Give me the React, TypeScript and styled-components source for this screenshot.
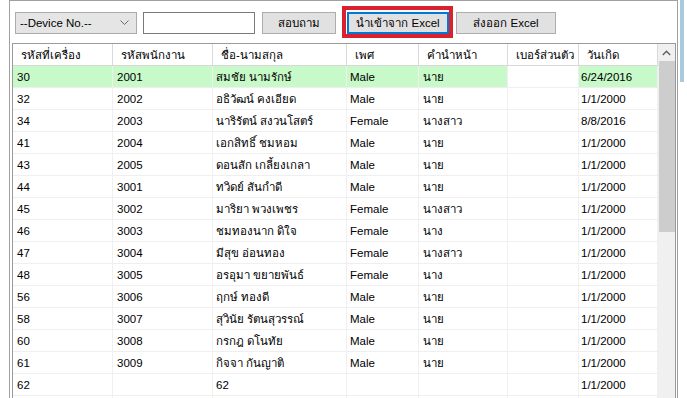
import React from 'react';
import styled, { createGlobalStyle } from 'styled-components';

const Global = createGlobalStyle`
  html, body { margin: 0; padding: 0; background: #ffffff; }
  body {
    font-family: Tahoma, "Liberation Sans", "DejaVu Sans", sans-serif;
    font-size: 11px;
    color: #000000;
  }
  * { box-sizing: border-box; }
`;

const Page = styled.div`
  display: flex;
  width: 687px;
  height: 398px;
  overflow: hidden;
  padding-left: 9px;
`;

const Frame = styled.div`
  width: 669px;
  height: 398px;
  flex: none;
  border: 1px solid #a0a0a0;
  border-bottom: none;
  display: flex;
  flex-direction: column;
`;

const SideStrip = styled.div`
  width: 10px;
  flex: none;
  padding-left: 1px;
`;

const SideBar = styled.div`
  width: 4px;
  height: 82px;
  background: #a9cadb;
  margin-left: 1px;
`;

const Toolbar = styled.div`
  height: 42px;
  flex: none;
  display: flex;
  align-items: flex-start;
  padding: 11px 0 0 5px;
`;

const Combo = styled.div`
  width: 122px;
  height: 22px;
  background: #e5e5e5;
  border: 1px solid #acacac;
  display: flex;
  align-items: center;
  justify-content: space-between;
  padding: 0 7px 0 4px;
  font-size: 11.5px;
`;

const TextBox = styled.div`
  width: 112px;
  height: 22px;
  margin-left: 6px;
  border: 1px solid #7a7a7a;
  background: #ffffff;
`;

const Button = styled.div<{ $w: number; $ml: number; $focused?: boolean }>`
  width: ${(p) => p.$w}px;
  height: 22px;
  margin-left: ${(p) => p.$ml}px;
  background: #e1e1e1;
  border: 1px solid ${(p) => (p.$focused ? '#0078d7' : '#adadad')};
  box-shadow: ${(p) => (p.$focused ? 'inset 0 0 0 1px #0078d7' : 'none')};
  display: flex;
  align-items: center;
  justify-content: center;
  font-size: 11.5px;
  position: relative;
`;

const Highlight = styled.div`
  position: absolute;
  left: -6px;
  right: -5px;
  top: -7px;
  bottom: -5px;
  border: 4px solid #d9222d;
  pointer-events: none;
`;

const Grid = styled.div`
  flex: 1;
  margin-left: 2px;
  width: 664px;
  border: 1px solid #9a9a9a;
  border-bottom: none;
  display: flex;
  overflow: hidden;
`;

const Table = styled.div`
  width: 645px;
  flex: none;
  display: flex;
  flex-direction: column;
`;

const Row = styled.div<{ $bg?: string }>`
  display: flex;
  height: 22px;
  flex: none;
  background: ${(p) => p.$bg ?? '#ffffff'};
`;

const HeadCell = styled.div<{ $w: number }>`
  width: ${(p) => p.$w}px;
  flex: none;
  height: 22px;
  border-right: 1px solid #dadada;
  border-bottom: 1px solid #d8d8d8;
  display: flex;
  align-items: center;
  padding-left: 8px;
  white-space: nowrap;
  overflow: hidden;
  font-size: 11.5px;
`;

const Cell = styled.div<{ $w: number; $pl: number; $white?: boolean }>`
  width: ${(p) => p.$w}px;
  flex: none;
  height: 22px;
  border-right: 1px solid #f0f0f0;
  border-bottom: 1px solid #efefef;
  display: flex;
  align-items: center;
  padding-left: ${(p) => p.$pl}px;
  white-space: nowrap;
  overflow: hidden;
  font-size: 11.5px;
  ${(p) => (p.$white ? 'background: #ffffff;' : '')}
`;

const Scrollbar = styled.div`
  width: 17px;
  flex: none;
  background: #f0f0f0;
  display: flex;
  flex-direction: column;
`;

const ArrowBtn = styled.div`
  height: 17px;
  flex: none;
  display: flex;
  align-items: center;
  justify-content: center;
`;

const Thumb = styled.div`
  height: 171px;
  flex: none;
  margin-left: 1px;
  background: #cdcdcd;
`;

const columns = [
  { title: 'รหัสที่เครื่อง', w: 100, pl: 4 },
  { title: 'รหัสพนักงาน', w: 100, pl: 4 },
  { title: 'ชื่อ-นามสกุล', w: 134, pl: 3 },
  { title: 'เพศ', w: 72, pl: 3 },
  { title: 'คำนำหน้า', w: 89, pl: 4 },
  { title: 'เบอร์ส่วนตัว', w: 71, pl: 3 },
  { title: 'วันเกิด', w: 79, pl: 2 },
];

const rows: string[][] = [
  ['30', '2001', 'สมชัย นามรักษ์', 'Male', 'นาย', '', '6/24/2016'],
  ['32', '2002', 'อธิวัฒน์ คงเอียด', 'Male', 'นาย', '', '1/1/2000'],
  ['34', '2003', 'นาริรัตน์ สงวนโสตร์', 'Female', 'นางสาว', '', '8/8/2016'],
  ['41', '2004', 'เอกสิทธิ์ ชมหอม', 'Male', 'นาย', '', '1/1/2000'],
  ['43', '2005', 'ดอนสัก เกลี้ยงเกลา', 'Male', 'นาย', '', '1/1/2000'],
  ['44', '3001', 'ทวิดย์ สันกำดี', 'Male', 'นาย', '', '1/1/2000'],
  ['45', '3002', 'มาริยา พวงเพชร', 'Female', 'นางสาว', '', '1/1/2000'],
  ['46', '3003', 'ชมทองนาก ดิใจ', 'Female', 'นาง', '', '1/1/2000'],
  ['47', '3004', 'มีสุข อ่อนทอง', 'Female', 'นางสาว', '', '1/1/2000'],
  ['48', '3005', 'อรอุมา ขยายพันธ์', 'Female', 'นาง', '', '1/1/2000'],
  ['56', '3006', 'ฤกษ์ ทองดี', 'Male', 'นาย', '', '1/1/2000'],
  ['58', '3007', 'สุวินัย รัตนสุวรรณ์', 'Male', 'นาย', '', '1/1/2000'],
  ['60', '3008', 'กรกฎ ดโนทัย', 'Male', 'นาย', '', '1/1/2000'],
  ['61', '3009', 'กิจจา กันญาติ', 'Male', 'นาย', '', '1/1/2000'],
  ['62', '', '62', '', '', '', '1/1/2000'],
  ['', '', '', '', '', '', ''],
];

export default function App() {
  return (
    <>
      <Global />
      <Page>
        <Frame>
          <Toolbar>
            <Combo>
              <span>--Device No.--</span>
              <svg width="9" height="6" viewBox="0 0 9 6">
                <polyline points="0.5,0.5 4.5,4.5 8.5,0.5" fill="none" stroke="#6d6d6d" strokeWidth="1" />
              </svg>
            </Combo>
            <TextBox />
            <Button $w={74} $ml={7}>สอบถาม</Button>
            <Button $w={102} $ml={11} $focused>
              นำเข้าจาก Excel
              <Highlight />
            </Button>
            <Button $w={100} $ml={7}>ส่งออก Excel</Button>
          </Toolbar>
          <Grid>
            <Table>
              <Row>
                {columns.map((c) => (
                  <HeadCell key={c.title} $w={c.w}>{c.title}</HeadCell>
                ))}
              </Row>
              {rows.map((r, i) => (
                <Row key={i} $bg={i === 0 ? '#c8f9c8' : undefined}>
                  {r.map((v, j) => (
                    <Cell key={j} $w={columns[j].w} $pl={columns[j].pl} $white={i === 0 && j === 5}>
                      {v}
                    </Cell>
                  ))}
                </Row>
              ))}
            </Table>
            <Scrollbar>
              <ArrowBtn>
                <svg width="9" height="6" viewBox="0 0 9 6">
                  <polyline points="0.8,5 4.5,1.3 8.2,5" fill="none" stroke="#606060" strokeWidth="1.4" />
                </svg>
              </ArrowBtn>
              <Thumb />
            </Scrollbar>
          </Grid>
        </Frame>
        <SideStrip>
          <SideBar />
        </SideStrip>
      </Page>
    </>
  );
}
